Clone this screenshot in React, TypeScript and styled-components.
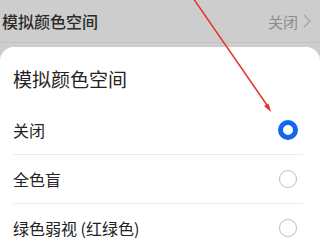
import React from "react";
import styled, { createGlobalStyle } from "styled-components";

const GlobalStyle = createGlobalStyle`
  html, body {
    margin: 0;
    padding: 0;
    background: #cdcdcd;
  }
  * {
    box-sizing: border-box;
  }
`;

const Page = styled.div`
  position: relative;
  width: 320px;
  height: 240px;
  overflow: hidden;
  background: #cdcdcd;
  font-family: "Noto Sans CJK SC", "Noto Sans", sans-serif;
`;

const SettingRow = styled.div`
  display: flex;
  align-items: center;
  justify-content: space-between;
  height: 43px;
  padding: 0 8px 0 2px;
  border-bottom: 1px solid #c3c3c3;
`;

const SettingLabel = styled.span`
  font-size: 16px;
  font-weight: 500;
  color: #2b2b2b;
`;

const SettingValue = styled.span`
  display: flex;
  align-items: center;
  gap: 4px;
  font-size: 15px;
  color: #8c8c8c;
`;

const Sheet = styled.div`
  margin-top: 4px;
  background: #ffffff;
  border-radius: 14px 14px 0 0;
  height: 200px;
  padding: 0 17px 0 13px;
`;

const SheetTitle = styled.div`
  padding: 20px 0 15px;
  line-height: 24px;
  font-size: 19px;
  color: #222222;
`;

const Option = styled.div<{ $last?: boolean }>`
  display: flex;
  align-items: center;
  justify-content: space-between;
  height: ${(p) => (p.$last ? "48px" : "49px")};
  border-bottom: ${(p) => (p.$last ? "none" : "1px solid #ececec")};
  font-size: 16px;
  color: #222222;
`;

const Radio = styled.span<{ $checked?: boolean }>`
  width: ${(p) => (p.$checked ? "20px" : "18px")};
  height: ${(p) => (p.$checked ? "20px" : "18px")};
  margin-right: ${(p) => (p.$checked ? "5px" : "6px")};
  border-radius: 50%;
  border: ${(p) => (p.$checked ? "5px solid #1464f0" : "1.5px solid #bdbdbd")};
  background: #ffffff;
`;

const Overlay = styled.svg`
  position: absolute;
  left: 0;
  top: 0;
  pointer-events: none;
`;

const options = ["关闭", "全色盲", "绿色弱视 (红绿色)"];

export default function App() {
  return (
    <Page>
      <GlobalStyle />
      <SettingRow>
        <SettingLabel>模拟颜色空间</SettingLabel>
        <SettingValue>
          关闭
          <svg width="10" height="16" viewBox="0 0 10 16">
            <path d="M2 2 L8 8 L2 14" fill="none" stroke="#a5a5a5" strokeWidth="1.3" />
          </svg>
        </SettingValue>
      </SettingRow>
      <Sheet>
        <SheetTitle>模拟颜色空间</SheetTitle>
        {options.map((label, i) => (
          <Option key={label} $last={i === options.length - 1}>
            {label}
            <Radio $checked={i === 0} />
          </Option>
        ))}
      </Sheet>
      <Overlay width="320" height="240" viewBox="0 0 320 240">
        <line x1="193" y1="-2" x2="269" y2="108" stroke="#e8332a" strokeWidth="1.5" />
        <path d="M271 112 L264 106 L268.5 103.5 Z" fill="#e8332a" />
      </Overlay>
    </Page>
  );
}
